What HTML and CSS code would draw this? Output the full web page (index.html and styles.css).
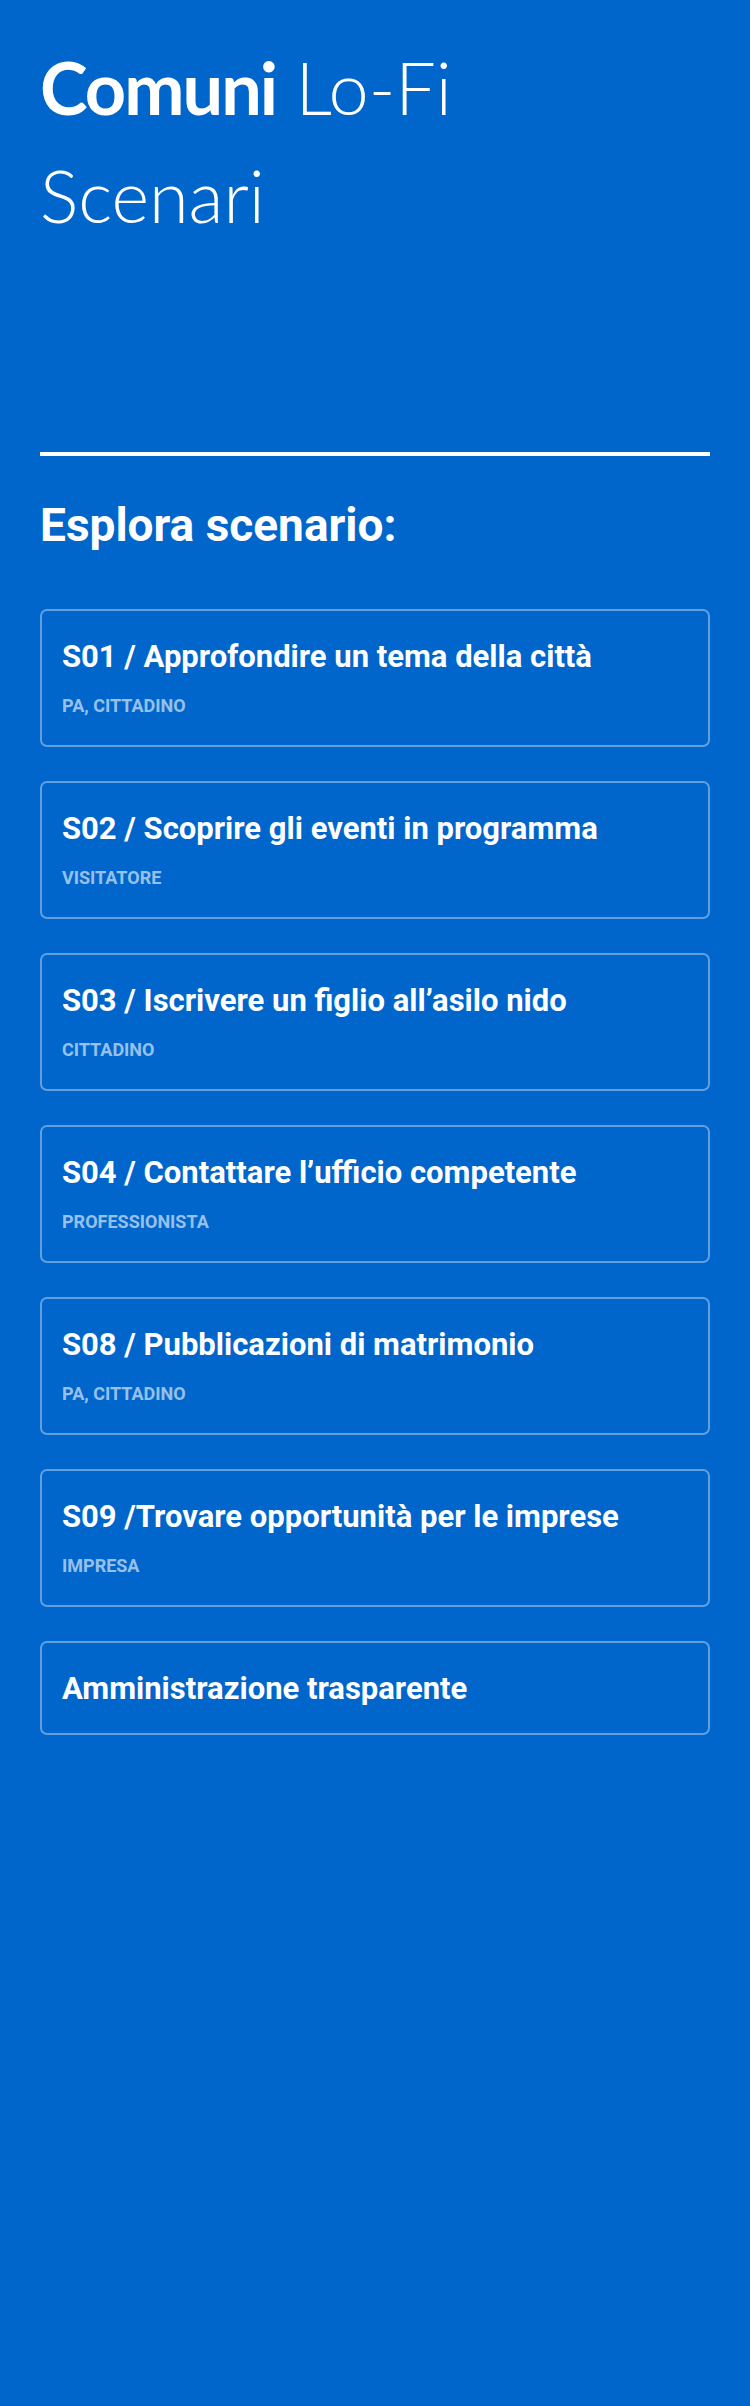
FILE: index.html
```html
<!DOCTYPE html>
<html lang="it">
<head>
<meta charset="utf-8">
<title>Comuni Lo-Fi Scenari</title>
<link rel="stylesheet" href="styles.css">
</head>
<body>
<main class="page">
  <header class="hero">
    <h1 class="hero-title"><strong class="hero-strong">Comuni</strong> <span class="hero-light">Lo-Fi</span><br><span class="hero-light">Scenari</span></h1>
  </header>
  <hr class="divider">
  <section class="explore">
    <h2 class="explore-title">Esplora scenario:</h2>
    <ul class="card-list">
      <li class="card"><a class="card-link" href="#"><span class="card-title">S01 / Approfondire un tema della città</span><span class="card-sub">PA, CITTADINO</span></a></li>
      <li class="card"><a class="card-link" href="#"><span class="card-title">S02 / Scoprire gli eventi in programma</span><span class="card-sub">VISITATORE</span></a></li>
      <li class="card"><a class="card-link" href="#"><span class="card-title">S03 / Iscrivere un figlio all’asilo nido</span><span class="card-sub">CITTADINO</span></a></li>
      <li class="card"><a class="card-link" href="#"><span class="card-title">S04 / Contattare l’ufficio competente</span><span class="card-sub">PROFESSIONISTA</span></a></li>
      <li class="card"><a class="card-link" href="#"><span class="card-title">S08 / Pubblicazioni di matrimonio</span><span class="card-sub">PA, CITTADINO</span></a></li>
      <li class="card"><a class="card-link" href="#"><span class="card-title">S09 /Trovare opportunità per le imprese</span><span class="card-sub">IMPRESA</span></a></li>
      <li class="card"><a class="card-link" href="#"><span class="card-title">Amministrazione trasparente</span></a></li>
    </ul>
  </section>
</main>
</body>
</html>
```

FILE: styles.css
```css
* { box-sizing: border-box; }

html, body {
  margin: 0;
  padding: 0;
  background: #0066cc;
}

body {
  font-family: "Roboto", "Noto Sans", sans-serif;
  color: #ffffff;
  min-height: 2406px;
}

.page {
  padding: 33px 40px 40px;
}

.hero {
  height: 419px;
}

.hero-title {
  margin: 0;
  font-family: "Lato", "Roboto", sans-serif;
  font-size: 72px;
  line-height: 108px;
  font-weight: 300;
}

.hero-strong {
  font-weight: 700;
  letter-spacing: -2px;
}

.hero-light {
  font-weight: 300;
}

.divider {
  margin: 0;
  border: 0;
  height: 4px;
  background: #ffffff;
}

.explore-title {
  margin: 42px 0 56px;
  font-size: 46px;
  line-height: 1.2;
  font-weight: 700;
}

.card-list {
  list-style: none;
  margin: 0;
  padding: 0;
  display: flex;
  flex-direction: column;
  gap: 34px;
}

.card {
  border: 2px solid rgba(255, 255, 255, 0.38);
  border-radius: 7px;
}

.card-link {
  display: flex;
  flex-direction: column;
  padding: 28px 20px 26px;
  color: #ffffff;
  text-decoration: none;
}

.card-title {
  font-size: 31px;
  line-height: 36px;
  font-weight: 700;
}

.card-sub {
  margin-top: 18px;
  font-size: 18px;
  line-height: 26px;
  font-weight: 700;
  color: rgba(255, 255, 255, 0.6);
}
```
